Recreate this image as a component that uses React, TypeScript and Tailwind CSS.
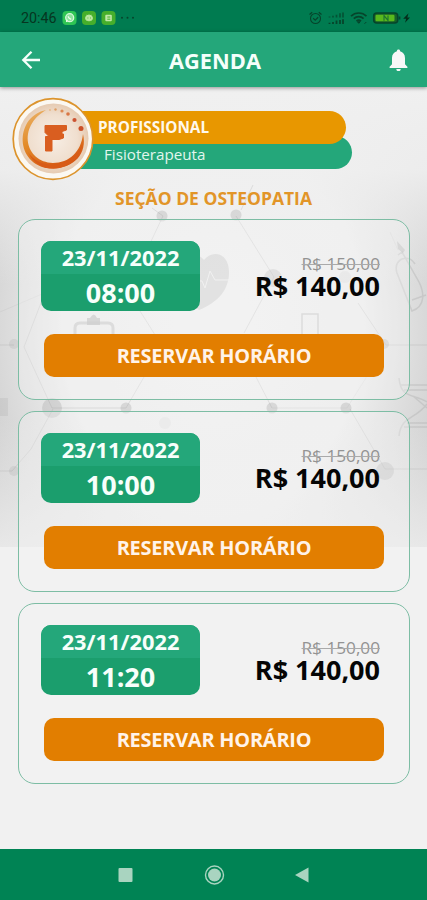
import React from "react";

interface Slot {
  date: string;
  time: string;
  oldPrice: string;
  price: string;
}

const slots: Slot[] = [
  { date: "23/11/2022", time: "08:00", oldPrice: "R$ 150,00", price: "R$ 140,00" },
  { date: "23/11/2022", time: "10:00", oldPrice: "R$ 150,00", price: "R$ 140,00" },
  { date: "23/11/2022", time: "11:20", oldPrice: "R$ 150,00", price: "R$ 140,00" },
];

const StatusBar: React.FC = () => (
  <div className="flex h-8 shrink-0 items-center bg-[#007b50] pt-1 pr-[15px] pl-[21px] text-[#06351f]">
    <span className="w-[35px] pt-px font-[Roboto] text-[14.3px] leading-none whitespace-nowrap">20:46</span>
    <svg className="ml-[6px]" width="76" height="16" viewBox="0 0 76 16" fill="none">
      <rect x="0.5" y="1" width="14" height="14" rx="4" fill="#2fc554" />
      <circle cx="7.7" cy="7.7" r="4" fill="#8de29c" stroke="#d7f8dc" strokeWidth="1.3" />
      <path d="M4.5 12l.6-2.4M6.2 6.3c.2 1.6 1.2 2.6 3 3" stroke="#effff0" strokeWidth="1.2" />
      <rect x="20" y="1" width="14" height="14" rx="4" fill="#46af2b" />
      <path d="M23.5 8.5a3.5 3.5 0 0 1 7 0c0 3-7 3-7 0zM25 4.8l.8 1.4M29 4.8l-.8 1.4" fill="#b9e7a1" stroke="#b9e7a1" />
      <path d="M25.5 8h.8M28 8h.8" stroke="#46af2b" />
      <rect x="39.5" y="1" width="14" height="14" rx="4" fill="#46af2b" />
      <rect x="43.3" y="4.7" width="6.5" height="6.5" rx="1" fill="#c0e9a8" />
      <path d="M45.3 7h3M45.3 9.2h3" stroke="#46af2b" />
      <circle cx="60" cy="7.7" r="1" fill="#06442b" />
      <circle cx="65.5" cy="7.7" r="1" fill="#06442b" />
      <circle cx="71" cy="7.7" r="1" fill="#06442b" />
    </svg>
    <svg className="ml-auto" width="104" height="16" viewBox="0 0 104 16" fill="none" stroke="#06442b">
      <circle cx="7.5" cy="8.5" r="5" strokeWidth="1.1" />
      <path d="M1.5 4.5l2.7-2.3M13.5 4.5l-2.7-2.3M5.2 8.3l2 1.8 3-2.8" strokeWidth="1.2" />
      <path d="M21.5 7.5v-1M25 7.5V5.7M28.5 7.5V4.7M32 7.5V3.2M35 7.5V2.5" strokeWidth="1.7" opacity=".75" />
      <path d="M21.5 14v-1.2M25 14v-2M28.5 14v-3.5M32 14v-4M35 14V9.2" strokeWidth="1.8" />
      <path d="M43 6.2c4.3-4.3 11.2-4.3 15.5 0M45.8 8.7c2.8-2.7 7-2.7 9.8 0M48.5 11.2c1.3-1.2 3.2-1.2 4.5 0" strokeWidth="1.7" />
      <path d="M49.5 11.8l1.3 1.5 1.3-1.5zM56.5 13.8l1.8-1.8" fill="#06442b" />
      <rect x="65.7" y="3" width="24" height="10" rx="3" strokeWidth="1.5" fill="#176129" />
      <path d="M91.5 6.5v3" strokeWidth="1.8" />
      <rect x="67.5" y="4.8" width="19" height="6.5" rx="1.3" fill="#58b81d" stroke="none" />
      <path d="M76 10.8V5.6l4 4.8V5.4" stroke="#1d7130" strokeWidth="1.1" />
      <path d="M100.5 3.2l-5.3 5.5h3l-1.2 4.1 5-5.4h-2.7z" fill="#052c1b" stroke="none" />
    </svg>
  </div>
);

const Header: React.FC = () => (
  <header className="relative z-10 flex h-[55px] shrink-0 items-center justify-between bg-[#24a77a] pr-[19px] pl-[21px] shadow-[0_1px_4px_rgba(0,0,0,0.4)]">
    <svg width="20" height="20" viewBox="0 0 20 20" fill="none" stroke="#f5fffb" strokeWidth="2.3">
      <path d="M19 10H3M10.5 1.8L2.3 10l8.2 8.2" />
    </svg>
    <h1 className="pt-[3px] text-[21.8px] leading-none font-bold text-[#f5fffb]">AGENDA</h1>
    <svg width="19" height="22" viewBox="0 0 19 22" fill="#f7f7f7">
      <path d="M9.5.5c-1 0-1.6.7-1.6 1.7-3.1.8-4.9 3.4-4.9 6.7v6.3L.6 17.7V19h17.8v-1.3L16 15.2V8.9c0-3.3-1.8-5.9-4.9-6.7 0-1-.6-1.7-1.6-1.7zM7.3 20a2.2 2.2 0 0 0 4.4 0z" />
    </svg>
  </header>
);

// Grey medical pattern behind the top of the page
const Backdrop: React.FC = () => (
  <svg className="absolute top-0 left-0" width="427" height="460" viewBox="0 0 427 460" fill="none">
    <defs>
      <radialGradient id="glow" gradientUnits="userSpaceOnUse" cx="0" cy="0" r="1" gradientTransform="translate(213 240) scale(275 340)">
        <stop offset="0" stopColor="#f2f2f2" />
        <stop offset=".55" stopColor="#eeeeee" />
        <stop offset=".74" stopColor="#dcdcdc" />
        <stop offset="1" stopColor="#c4c4c4" />
      </radialGradient>
      <linearGradient id="fade" x1="0" y1="0" x2="0" y2="1">
        <stop offset="0" stopColor="#f0f0f0" />
        <stop offset=".18" stopColor="#f0f0f0" stopOpacity=".9" />
        <stop offset=".43" stopColor="#f0f0f0" stopOpacity="0" />
        <stop offset=".72" stopColor="#f0f0f0" stopOpacity="0" />
        <stop offset=".93" stopColor="#f0f0f0" stopOpacity=".65" />
        <stop offset="1" stopColor="#f1f1f1" stopOpacity=".8" />
      </linearGradient>
    </defs>
    <rect width="427" height="460" fill="url(#glow)" />
    <rect width="427" height="460" fill="url(#fade)" />
    <g stroke="#999" strokeOpacity=".23">
      <path d="M163 129L145 167M152 121l11 8M236 129l38 61-30 56M253 98l-12 25M140 224l17 27M144 290l-18 31H52l-28-61 20-52M53 322l-22 40-19 22H0M256 290l16 31M350 322l35 60h42M358 216l28 42h41M0 258h14" />
      <path d="M0 225l70-30M390 145l8 18M272 321h75l22-35" strokeOpacity=".12" />
    </g>
    <g fill="#999" fillOpacity=".27">
      <circle cx="162" cy="129" r="5.5" />
      <circle cx="236" cy="128" r="5.5" />
      <circle cx="273" cy="191" r="9" />
      <circle cx="345" cy="190" r="6" fillOpacity=".12" />
      <circle cx="52" cy="321" r="10" />
      <circle cx="126" cy="321" r="5.5" />
      <circle cx="272" cy="321" r="5.5" />
      <circle cx="346" cy="321" r="5.5" />
      <circle cx="385" cy="384" r="9" />
      <circle cx="384" cy="257" r="5" />
      <circle cx="14" cy="257" r="5" fillOpacity=".18" />
      <circle cx="14" cy="384" r="5" fillOpacity=".18" />
      <circle cx="165" cy="336" r="6" fillOpacity=".1" />
      <path d="M0 311h8v18H0z" fillOpacity=".18" />
      <path d="M199 223c-13-8-22-22-22-37 0-18 18-24 27-13 9-11 25-7 25 12 0 17-10 30-30 38z" />
    </g>
    <path d="M190 194h12l3 7 5-17 5 9h18" stroke="#f0f0f0" />
    <path d="M75 252v-11q0-5 5-5h28q5 0 5 5v11" stroke="#bbb" strokeOpacity=".6" strokeWidth="3" />
    <path d="M87 238v-7h3q4-7 7 0h3v7z" fill="#bbb" fillOpacity=".75" />
    <path d="M302 251v-24h16v24" stroke="#bbb" strokeOpacity=".6" strokeWidth="1.5" />
    <g stroke="#aaa" strokeOpacity=".35" strokeWidth="1.5">
      <path d="M398 168l4-3 17 30c5 10 7 24-7 29l-15-38q-3-10 5-14 8-3 13 5M412 213l14-5" />
      <path d="M399 291c2 22 15 15 28 24M399 349c2-20 16-16 28-32M401 298h26M404 303h23M407 336h20M404 340h23M413 309l14 12" />
    </g>
    <path d="M397 154l8 9-2 3-5-4z" fill="#999" fillOpacity=".35" />
  </svg>
);

const Logo: React.FC = () => (
  <svg className="relative z-20 shrink-0" width="82" height="84" viewBox="0 0 82 84">
    <defs>
      <radialGradient id="disc">
        <stop offset="0" stopColor="#f7eee5" />
        <stop offset=".68" stopColor="#f0dfcf" />
        <stop offset="1" stopColor="#e6cbb2" />
      </radialGradient>
      <linearGradient id="ring" x1="0" y1="0" x2=".5" y2="1">
        <stop offset="0" stopColor="#eab46c" />
        <stop offset=".5" stopColor="#e38b28" />
        <stop offset="1" stopColor="#d65a15" />
      </linearGradient>
    </defs>
    <ellipse cx="41" cy="42" rx="39.8" ry="40.3" fill="#fbf8f2" stroke="#dc942d" strokeWidth="1.7" />
    <circle cx="41.5" cy="41.5" r="35" fill="url(#disc)" />
    <path d="M34 13C4 19 2 64 34 71c26 3 42-13 37-34-2 18-14 29-30 29C13 65 5 30 34 13z" fill="url(#ring)" />
    <path d="M16 55c9 16 43 20 54-7-4 27-43 33-54 7z" fill="#d85b17" />
    <circle cx="38" cy="13" r=".9" fill="#e7b886" />
    <circle cx="43.5" cy="12.5" r="1.2" fill="#df9f66" />
    <circle cx="50" cy="14" r="1.6" fill="#dd8953" />
    <circle cx="56" cy="17" r="1.8" fill="#d97644" />
    <circle cx="62.5" cy="23" r="2.1" fill="#cc5331" />
    <circle cx="69" cy="31.5" r="2.5" fill="#cc5128" />
    <path d="M33 28.5h21.5V33l-4.5 1.5V37h1.500v4l-4.500 1.500h-7V54h-6.500V39.500H37l-4-4z" fill="#d95e20" stroke="#d95e20" strokeLinejoin="round" />
  </svg>
);

const Professional: React.FC = () => (
  <div className="flex pt-[10px] pl-3">
    <Logo />
    <div className="-ml-11 flex flex-col pt-[14px]">
      <div className="relative z-10 h-[33px] w-[296px] rounded-r-full bg-[#e89700] pl-[48px]">
        <p className="text-[15.3px] leading-[32px] font-bold text-[#fff8ec]">PROFISSIONAL</p>
      </div>
      <div className="-mt-2 h-[33px] w-[301.500px] rounded-r-full bg-[#24a77a] pt-[8px] pl-[54px]">
        <p className="text-[15.2px] leading-[20px] text-[#e2f6ed]">Fisioterapeuta</p>
      </div>
    </div>
  </div>
);

const SlotCard: React.FC<{ slot: Slot }> = ({ slot }) => (
  <li className="h-[181px] rounded-[17px] border border-[#7dbda4] bg-[#f4f4f4]/35 px-[22px] pt-[21px]">
    <div className="flex justify-between">
      <div className="h-[70.5px] w-[159px] overflow-hidden rounded-[10px] bg-[#1b9e6d] text-center font-bold text-[#f7fffb]">
        <p className="h-[33.5px] bg-[#24a77a] text-[21.8px] leading-[33px]">{slot.date}</p>
        <p className="text-[27px] leading-[38px]">{slot.time}</p>
      </div>
      <div className="pt-[13px] pr-[7px] text-right">
        <p className="text-[17.2px] leading-[20px] text-[#939393] line-through decoration-[#aaa] decoration-1">{slot.oldPrice}</p>
        <p className="text-[27px] leading-[24px] font-bold text-[#050505]">{slot.price}</p>
      </div>
    </div>
    <button className="mt-[23px] ml-[3px] block h-[43px] w-[340px] rounded-[10px] bg-[#e27e00] text-[19.9px] leading-none font-bold tracking-[-0.2px] text-[#fff3e9]">
      RESERVAR HORÁRIO
    </button>
  </li>
);

const NavigationBar: React.FC = () => (
  <nav className="flex h-[51px] shrink-0 items-center justify-center gap-[68px] bg-[#008354]">
    <svg width="20" height="20" viewBox="0 0 20 20">
      <rect x="3.5" y="3" width="14" height="14" rx="1" fill="#a9d4c0" />
    </svg>
    <svg width="22" height="22" viewBox="0 0 22 22">
      <circle cx="11.5" cy="11" r="9" fill="none" stroke="#a9d4c0" strokeWidth="1.4" />
      <circle cx="11.5" cy="11" r="6.5" fill="#a9d4c0" />
    </svg>
    <svg width="20" height="20" viewBox="0 0 20 20">
      <path d="M15.5 2.5v15L2 10z" fill="#a9d4c0" />
    </svg>
  </nav>
);

const App: React.FC = () => {
  return (
    <div className="flex h-[900px] w-[427px] flex-col overflow-hidden bg-[#f1f1f1] font-['Open_Sans',sans-serif]">
      <StatusBar />
      <Header />
      <main className="relative flex-1">
        <Backdrop />
        <div className="relative">
          <Professional />
          <h2 className="mt-[7px] text-center text-[17.5px] leading-[20px] font-bold text-[#e29528]">
            SEÇÃO DE OSTEOPATIA
          </h2>
          <ul className="mt-[10.5px] flex flex-col gap-[11px] pr-[17px] pl-[18px]">
            {slots.map((slot, index) => (
              <SlotCard key={index} slot={slot} />
            ))}
          </ul>
        </div>
      </main>
      <NavigationBar />
    </div>
  );
};

export default App;
